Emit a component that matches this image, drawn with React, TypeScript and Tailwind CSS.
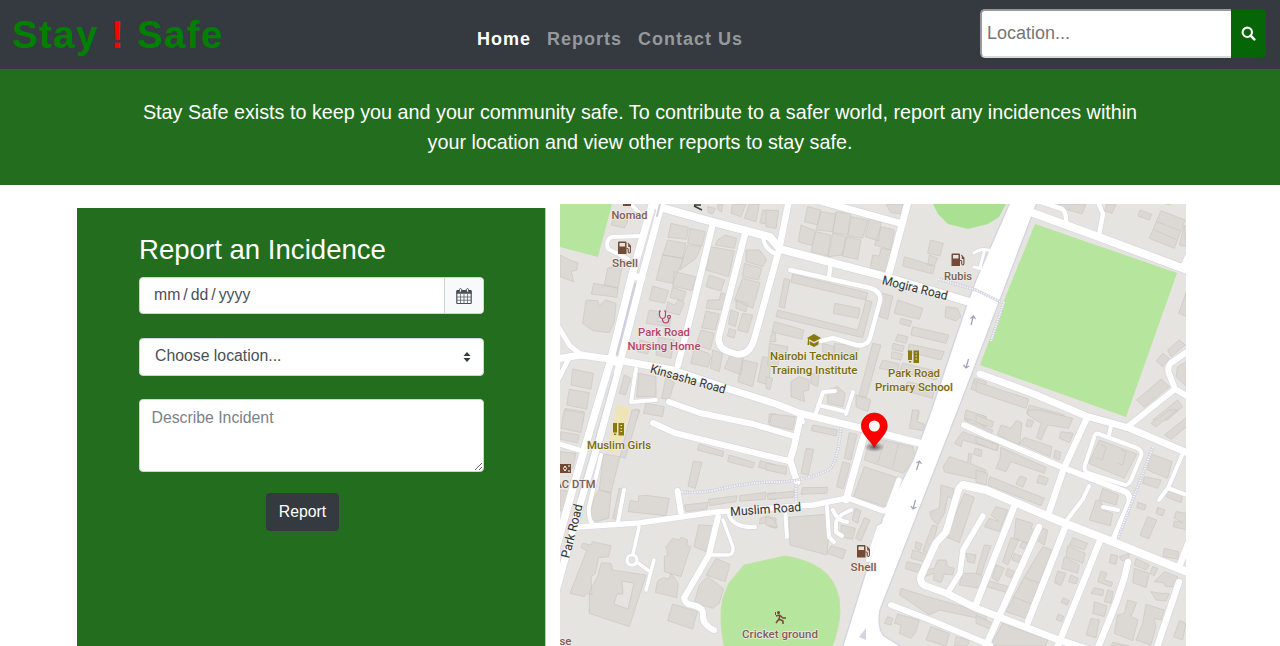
import React from "react";

type Road = [string, number];

const roads: Road[] = [
  ["M653 202L632 275L610 363L593 420L573 488L555 552", 7.5],
  ["M662 202L641 280L620 363L600 437L587 480L575 522L556 592", 7],
  ["M632 276L642 278M611 362L620 362", 7],
  ["M556 359L581 355L623 361L673 370L729 389L776 404L799 413L856 427L919 443", 7],
  ["M669 402L700 413L753 424L793 436", 6],
  ["M653 423L675 433L703 440L776 458L789 461", 6],
  ["M801 415L794 447L790 460L797 482", 6.5],
  ["M659 207L713 222L770 237L780 249L879 275L973 303", 8],
  ["M789 200L779 250L754 340Q749 356 736 354L727 351Q717 347 719 336L746 230", 6.5],
  ["M713 223L692 310L678 365", 6.5],
  ["M763 237Q764 249 776 254", 4],
  ["M823 202L899 223M908 202L888 277", 7],
  ["M790 270L866 287Q882 290 880 301L870 338Q867 347 856 345L833 338L821 341M831 262L829 277", 4.5],
  ["M816 413L823 392L835 391M846 414L853 392M818 405L843 411M800 412L803 422", 4],
  ["M1033 213L1099 237L1190 271", 8],
  ["M1041 202L1062 209Q1067 213 1066 224M1098 202L1103 214L1099 235M1190 250L1182 268", 4.5],
  ["M974 253Q981 247 992 251M974 267L986 270M984 252L980 268", 3],
  ["M980 374L1034 394L1086 416L1129 428L1190 454", 7],
  ["M1190 350L1171 363Q1166 368 1170 376L1175 389L1126 428M1175 389L1190 398", 6],
  ["M964 425L986 435L1064 468L1126 492Q1131 496 1129 504L1114 538", 6],
  ["M963 485L986 490L1064 523L1103 538L1190 573", 8],
  ["M964 485Q959 485 957 495L946 532L936 543L921 576Q919 583 926 586L946 593L976 608L1059 640L1090 650", 7],
  ["M983 516L963 550L960 573L947 594M988 575L976 603", 5.5],
  ["M1086 420L1064 468L1048 515", 6.5],
  ["M1014 507L975 607M1039 527L984 650M1066 525L1028 622M1101 538L1057 648", 6.5],
  ["M1128 562L1124 579L1116 603L1097 650M1179 582L1156 650M1190 539L1179 567", 6.5],
  ["M1099 434L1137 448Q1143 451 1141 456L1131 480Q1128 487 1122 484L1088 473Q1083 470 1085 465L1094 438Q1095 432 1099 434M1111 426L1109 435", 4],
  ["M1089 486L1083 499L1067 520M1103 507L1118 510M1183 453L1168 488L1159 500M1168 488L1190 496", 4],
  ["M891 605L930 620L990 645", 6],
  ["M577 527L639 523L716 512L813 505L848 498L883 511Q889 510 890 504L899 480", 5.5],
  ["M864 436L846 500", 7],
  ["M624 490L618 522M601 455L589 507Q588 518 592 523", 4],
  ["M677.500 491L681 513", 6],
  ["M639 527L633 554M638 563L649 571M654 560L646 590", 3.5],
  ["M718 517L709 555L684 598Q685 604 692 605Q703 607 703 614Q702 625 714 630", 6],
  ["M723 520L733 547Q734 555 727 555L711 555", 3.5],
  ["M729 515Q734 528 755 527M785 508L787 537M827 507L829 537L834 542", 4],
  ["M833 510Q837 521 847 522M851 510Q836 516 836 524L836 532L842 536M884 525L879 527L868 560", 4],
  ["M641 236L612 237Q605 239 608 249L628 259M629 202L643 217", 4],
  ["M556 323L570 346L583 356M568 360L558 380M556 443L579 450", 5],
  ["M636 369L631 402L656 400", 4],
];

const footpaths = [
  "M682 492Q700 494 725 488T776 482T829 470Q838 462 841 427",
  "M796 483L796 502",
  "M1153 447L1118 538",
  "M938 279L976 290L1003 303",
  "M1004 302L991 341",
];

/* Building outlines by map tile; tile units are one third of a pixel. */
const tiles: { x: number; y: number; d: string }[] = [
  {
    x: 556, y: 200,
    d: `M345 70L397 82L392 118L336 112ZM402 85L448 95L438 138L395 130ZM335 120L390 130L380 175L320 165ZM320 165L380 175L372 210L420 175L435 140L395 135L375 195L350 250L300 240ZM355 215L420 230L408 272L350 258Z
    M290 258L338 272L326 310L280 300ZM350 262L390 275L382 303L342 292ZM335 305L355 315L368 300L385 308L370 345L330 335ZM280 330L310 335L305 365L345 355L340 380L270 370Z
    M485 120L508 105L542 115L535 145L478 135ZM465 140L535 153L518 230L450 210ZM460 225L506 240L495 273L450 260ZM455 300L490 300L495 278L512 284L498 330L450 325Z
    M450 333L490 342L478 390L437 384ZM435 390L475 400L463 450L420 435ZM415 445L458 460L464 475L456 502L404 490ZM470 450L500 460L490 515L463 505Z
    M570 150L610 150L632 178L620 200L570 185ZM565 190L618 205L608 240L560 230ZM560 235L612 248L600 290L590 325L535 300ZM540 300L575 310L570 335L540 325ZM525 330L548 338L538 380L518 372ZM560 340L590 345L575 398L545 390ZM520 385L540 392L534 414L514 408Z
    M525 460L562 470L555 525L505 505ZM560 480L605 490L590 560L545 545ZM620 470L645 475L638 555L605 545Z
    M155 205L200 195L185 265L145 255ZM113 250L186 263L183 292L106 282ZM90 300L125 302L130 318L148 300L180 310L175 365L160 398L110 392L80 370Z
    M12 165L40 180L66 188L62 210L46 215L53 245L12 230ZM175 50L215 62L205 84L165 75ZM205 525L225 535L208 585L190 580ZM248 520L300 530L300 590L242 590ZM270 609L325 620L320 650L262 640ZM330 530L355 548L340 598L317 595Z
    M50 507L112 520L105 568L45 555ZM40 568L100 578L92 628L32 615ZM28 625L85 635L80 670L20 660ZM238 627L252 630L240 662L228 662ZM307 412L355 420L345 475L300 465ZM252 420L285 428L275 462L245 455Z
    M485 12L500 12L497 36L485 28ZM530 12L570 12L555 50L525 40ZM580 12L610 12L600 65L565 55ZM620 30L660 35L660 80L612 68ZM455 20L478 25L470 42L457 38ZM655 380L660 425L640 425Z`,
  },
  {
    x: 766, y: 200,
    d: `M125 20L165 30L155 75L115 65ZM165 35L210 42L200 95L150 90ZM210 35L255 40L245 105L200 98ZM255 50L305 60L290 115L245 108ZM105 75L148 92L138 137L97 125ZM150 95L195 105L185 168L135 155ZM200 100L240 110L230 165L187 170ZM242 110L285 120L275 178L228 168Z
    M310 55L345 68L338 123L297 110ZM345 80L385 90L375 150L325 135ZM360 12L412 12L405 42L375 38ZM320 165L340 168L345 145L375 150L360 215L312 205ZM0 30L38 32L30 85L0 80Z
    M493 120L532 130L522 168L485 160ZM490 165L515 175L505 198L485 195ZM415 170L507 198L500 222L410 198Z
    M80 222L305 278L300 300L75 247ZM55 235L72 240L55 325L39 320ZM207 310L282 325L277 355L202 340ZM35 330L275 390L300 300L318 305L290 413L30 350ZM25 365L113 390L108 418L18 396Z
    M350 280L380 288L365 358L340 350ZM395 300L470 325L460 358L385 340ZM540 320L575 325L585 350L570 363L537 352ZM405 355L437 363L432 380L401 370ZM440 380L548 405L540 430L435 405ZM395 403L425 410L420 430L388 422ZM382 430L415 438L410 455L378 448ZM430 432L535 455L525 480L425 455ZM378 455L410 462L405 480L375 475ZM350 480L400 492L395 515L340 505ZM425 545L505 565L500 595L410 570ZM410 490L520 515L510 540L400 515Z
    M320 430L345 435L300 595L278 590ZM10 430L65 440L62 465L40 468L35 500L5 495ZM170 430L205 440L200 465L170 455ZM205 430L280 440L270 475L205 465ZM0 530L20 535L12 570L0 565ZM75 545L100 530L130 540L128 570L112 575L116 605L75 590ZM135 520L160 525L155 560L135 550ZM185 570L215 560L238 580L230 620L185 610ZM270 585L295 590L315 600L305 635L270 620ZM440 630L460 635L455 660L435 660ZM625 535L660 545L660 580L615 568ZM600 632L660 650L660 660L595 660Z`,
  },
  {
    x: 976, y: 200,
    d: `M235 12L330 12L318 42L250 22ZM393 12L420 12L408 40L385 33ZM492 30L527 43L520 60L486 48ZM555 32L627 60L595 145L520 115ZM542 65L612 92M530 88L600 118M625 75L632 140L610 135ZM630 278L632 350L608 340ZM610 420L628 435L585 470L575 450ZM560 460L580 475L560 500L541 483ZM605 500L632 485L632 560L600 530ZM555 537L580 560L505 622L482 600ZM605 600L620 620L575 660L530 660Z
    M0 545L158 597L150 625L0 575ZM160 615L265 645L260 660L152 640Z`,
  },
  {
    x: 556, y: 410,
    d: `M25 0L85 10L75 68L15 55ZM15 65L70 75L65 98L12 88ZM12 125L60 130L50 175L12 165ZM12 240L45 245L30 315L12 300ZM228 0L250 2L208 145L192 140ZM142 132L192 140L165 248L130 240ZM130 240L165 250L158 325L120 335L100 320L115 260ZM190 235L207 240L185 330L170 325Z
    M430 102L503 125L500 140L424 120ZM520 135L597 158L590 174L515 155ZM613 152L660 165L660 185L607 172ZM412 153L438 157L418 235L396 228ZM640 12L660 12L660 45L637 38Z
    M248 258L270 256L340 265L330 317L217 305L222 272L247 275ZM385 285L455 277L453 297L390 305ZM457 268L543 257L540 275L460 287ZM551 257L630 247L628 268L550 274ZM635 250L660 248L660 268L640 268Z
    M613 325L635 318L660 325L660 355L640 350L635 337L610 342ZM428 345L475 347L450 425L414 410ZM80 400L105 405L110 395L165 407L158 440L128 443L118 490L105 500L108 555L90 550L85 560L65 555L42 550L92 422L76 413Z
    M136 458L165 460L170 480L270 495L220 650L100 610L100 545L125 500ZM350 385L370 390L375 382L395 390L392 405L404 410L375 500L325 485L325 440L335 435L330 410ZM322 502L338 508L345 490L367 520L362 563L298 547L305 512ZM480 445L522 463L508 515L450 495ZM455 500L503 537L490 580L470 595L415 578L430 525ZM350 582L424 605L410 657L335 632Z`,
  },
  {
    x: 766, y: 410,
    d: `M18 12L88 20L80 60L10 45ZM140 45L215 60L210 78L136 62ZM120 115L143 118L127 195L105 190ZM0 160L62 170L60 193L0 180ZM250 68L273 73L255 150L235 145ZM230 155L253 162L232 236L212 230ZM110 233L185 232L182 250L105 253ZM5 252L85 243L83 262L5 268Z
    M350 90L440 110L448 145L412 190L295 150L310 90ZM354 97L335 160M397 102L380 175M295 170L400 205L375 295L262 260ZM68 322L178 313L190 350L183 435L72 405ZM268 295L285 303L275 340L258 330ZM295 323L312 330L285 393L268 385ZM195 407L240 420L230 447L185 430ZM225 345L268 355L260 388L225 380ZM0 320L25 330L35 353L0 345Z
    M440 0L458 0L452 35L475 42L472 62L430 55ZM600 0L660 20L660 50L595 22ZM590 65L698 104L695 122L590 90L585 110L565 100ZM628 115L648 120L645 140L622 133ZM550 140L605 158L608 130L618 133L612 160L660 180L655 212L535 186L532 170ZM525 225L565 237L558 265L545 260L535 310L515 345L495 325L492 305L520 295ZM595 250L625 262L580 398L540 380ZM500 345L515 350L490 430L470 423ZM440 420L482 432L475 455L435 445ZM450 395L468 402L462 422L447 415ZM423 455L465 465L460 488L418 476ZM515 450L540 450L545 470L565 475L560 495L535 492L525 518L502 510L505 490L475 500L480 480L505 475ZM600 430L630 435L625 460L605 455ZM590 490L645 490L655 515L640 535L580 525ZM600 32L680 60L675 78L595 50Z
    M405 535L485 560L660 610L660 630L520 600L490 615L425 570L400 555ZM365 620L380 625L375 645L355 640ZM395 612L460 630L450 665L435 685L400 670L405 645L385 640ZM495 650L550 670L540 708L480 690ZM570 680L610 690L605 708L565 708Z`,
  },
  {
    x: 976, y: 410,
    d: `M0 15L52 35L48 52L0 38ZM75 45L105 55L120 32L138 38L130 105L65 75ZM155 28L173 33L165 52L150 48ZM155 0L190 0L290 25L278 55L215 45L195 90L182 83L195 40L155 15ZM255 65L292 70L280 98L250 85ZM145 82L228 110L222 140L130 100ZM237 120L255 127L250 150L233 143Z
    M75 112L210 172L205 190L105 155L90 185L60 175L72 145ZM0 80L68 105L60 122L0 98ZM42 200L205 265L195 287L35 225ZM0 180L35 190L30 225L0 218ZM132 198L152 205L140 232L120 222ZM190 195L217 205L210 225L182 218Z
    M370 90L482 132L445 205L338 160ZM375 105L390 110L380 150L360 143M435 120L450 125L440 165L425 160M520 130L588 155L575 205L515 180ZM505 200L555 210L545 235L500 220ZM575 235L622 248L615 278L570 260ZM486 277L510 285L505 300L482 293ZM545 292L567 300L560 318L540 310ZM515 320L542 330L518 387L492 375ZM600 305L632 310L632 360L592 350L595 333L620 337L595 325ZM380 235L428 255L420 285L370 270ZM360 270L375 275L380 300L410 310L403 348L340 330ZM565 415L607 425L607 448L560 440Z
    M525 40L580 0L605 0L540 50ZM565 75L632 22L632 50L585 88Z
    M60 290L95 300L70 365L25 350L40 325L68 335L45 315ZM120 325L170 340L165 355L180 362L155 400L115 385ZM185 350L215 360L205 405L180 390ZM25 405L45 407L15 495L0 490ZM105 383L128 390L95 465L80 455ZM140 395L155 400L145 418L130 410ZM115 430L138 440L130 458L108 450ZM60 465L85 475L65 515L48 503ZM95 475L115 485L105 505L88 495ZM40 513L98 530L90 547L33 530ZM200 410L228 420L150 625L90 605L145 500ZM145 503L190 520M110 560L167 582M290 383L335 400L325 420L280 405ZM275 407L328 430L320 460L270 440ZM265 440L310 465L305 490L257 475ZM245 483L270 490L255 527L235 518ZM285 495L307 505L300 522L278 515ZM262 563L280 572L275 585L255 577ZM247 612L264 620L257 635L240 628Z
    M405 433L425 437L420 463L400 458ZM375 483L393 490L385 510L410 517L405 530L365 515ZM355 533L384 540L380 557L345 550ZM395 540L412 545L405 580L385 575ZM355 575L393 588L385 620L350 610ZM345 625L370 630L360 683L330 675ZM430 440L460 430L455 455L435 450ZM480 445L520 465L510 480L475 465ZM475 475L520 490L510 533L470 518ZM530 470L545 475L535 497L522 490ZM455 570L482 578L465 620L486 630L470 692L415 670L425 615L445 610ZM510 583L565 600L555 630L535 625L540 650L525 705L480 690L500 640ZM525 545L555 550L580 550L570 573L540 570ZM565 485L605 500L595 530L570 530L560 518L535 515ZM610 632L630 640L620 690L593 680Z
    M0 615L50 640L42 657L0 640ZM80 640L215 690L208 708L42 708ZM410 697L460 708L405 708Z`,
  },
];

const Fuel = ({ x, y }: { x: number; y: number }) => (
  <g transform={`translate(${x} ${y})`}>
    <path
      fill="#734b35"
      fillRule="evenodd"
      d="M0 1Q0 0 1 0H7.5Q8.5 0 8.5 1V12.5H0ZM1.5 1.6V5H7V1.6Z"
    />
    <path
      d="M8.5 7H9.5Q10.2 7 10.2 8V10.5Q10.4 11.5 11.3 11.5Q12.4 11.5 12.4 10V4.5L9.8 1.5M12.4 5L10.8 5L10.8 3"
      fill="none"
      stroke="#734b35"
      strokeWidth="1.1"
    />
  </g>
);

const School = ({ x, y }: { x: number; y: number }) => (
  <g transform={`translate(${x} ${y})`} fill="#8a7a0c">
    <path d="M0 0H4V9.5H0ZM1 10.5H3.2V12H1Z" />
    <path fillRule="evenodd" d="M5.5 0H11V12.5H5.5ZM7.5 2V3H9V2ZM7.5 5V6H9V5ZM7.5 8V9H9V8Z" />
  </g>
);

type Label = { t: string; x: number; y: number; w: number; c: string; r?: number };

const brown = "#7d5f53";
const olive = "#7a6c0a";
const rose = "#b3446c";
const ink = "#333333";

const labels: Label[] = [
  { t: "Nomad", x: 629.5, y: 219, w: 36, c: brown },
  { t: "Shell", x: 625, y: 267, w: 26, c: brown },
  { t: "Rubis", x: 958, y: 280, w: 28, c: brown },
  { t: "Shell", x: 863.5, y: 570.5, w: 26, c: brown },
  { t: "AC DTM", x: 575, y: 488, w: 41, c: brown },
  { t: "Cricket ground", x: 780, y: 638, w: 76, c: brown },
  { t: "se", x: 565.5, y: 645, w: 12, c: brown },
  { t: "Park Road", x: 664, y: 336, w: 52, c: rose },
  { t: "Nursing Home", x: 664, y: 350, w: 73, c: rose },
  { t: "Nairobi Technical", x: 814, y: 360, w: 88, c: olive },
  { t: "Training Institute", x: 814, y: 374, w: 87, c: olive },
  { t: "Park Road", x: 914, y: 376.8, w: 52, c: olive },
  { t: "Primary School", x: 914, y: 390.8, w: 78, c: olive },
  { t: "Muslim Girls", x: 619, y: 449, w: 64, c: olive },
  { t: "Kinsasha Road", x: 687, y: 383.2, w: 78, c: ink, r: 16 },
  { t: "Mogira Road", x: 914, y: 292, w: 67, c: ink, r: 14 },
  { t: "Muslim Road", x: 766, y: 513.5, w: 71, c: ink, r: -4 },
  { t: "Park Road", x: 576, y: 532, w: 55, c: ink, r: -76 },
];

function StreetMap() {
  return (
    <svg
      className="block h-[442px] w-[626px] shrink-0 bg-[#e5e4e0]"
      viewBox="560 204 626 442"
      role="img"
      aria-label="Street map"
    >
      <g fill="#b6e59e">
        <path d="M560 204H612L598 257L560 247Z" />
        <path d="M1035 224L1177 273L1126 417L980 365L1007 293Z" />
        <path fill="#aae092" d="M933 204H1006L999 217L988 224L968 229L948 224L938 214Z" />
        <path fill="#aae092" d="M1165 204H1172L1169 205Z" />
        <path
          stroke="#c5e2a4"
          d="M725 650Q718 620 723 598L729 583L744 565L785 556Q806 559 821 569Q835 579 839 598L840 612Q839 630 831 650Z"
        />
      </g>
      <path d="M617 405L630 408L618 454L607 451Z" fill="#efe4b4" />
      {tiles.map((t) => (
        <g key={`${t.x}-${t.y}`} transform={`translate(${t.x} ${t.y}) scale(.33333)`}>
          <path d={t.d} fill="#dcd8d4" stroke="#ccc5c0" strokeWidth="2" />
        </g>
      ))}
      <path d="M622 581L634 583L628 609L614 604L617 594H623Z" fill="#e5e4e0" stroke="#ccc5c0" strokeWidth=".7" />
      <g fill="none" strokeLinecap="round" strokeLinejoin="round">
        {roads.map(([d, w]) => (
          <path key={`c${d}`} d={d} stroke="#d5d5e2" strokeWidth={w + 1.2} />
        ))}
        <circle cx="632" cy="560" r="5" stroke="#d5d5e2" strokeWidth="4.4" />
        <path
          d="M1011 200L976 280L966 307L930 414L913 460L883 517L840 655H915L884 636Q877 628 880 610L958 410L976 363L1038 200Z"
          fill="#fff"
          stroke="#d5d5e2"
          strokeWidth="1.4"
        />
        {roads.map(([d, w]) => (
          <path key={d} d={d} stroke="#fff" strokeWidth={w} />
        ))}
        <circle cx="632" cy="560" r="5" stroke="#fff" strokeWidth="3.2" />
        <path d="M660 204L657 216M635 284L617 354" stroke="#cfcfdd" strokeWidth="2" />
        <path d="M613.500 374L596 436L578 497" stroke="#d5d5e2" strokeWidth="1" />
        {footpaths.map((d) => (
          <g key={d} strokeLinecap="butt">
            <path d={d} stroke="#cfcfdf" strokeWidth="3" />
            <path d={d} stroke="#f4f4f7" strokeWidth="2" strokeDasharray="1.5 1" />
          </g>
        ))}
      </g>
      <g fill="none" stroke="#9ea0ba" strokeWidth="1.200">
        <path d="M971 325L973.500 316M970.500 318.500L973.500 316L975.500 319M968.500 359L966 368M963.500 365L966 368L969 366" />
        <path d="M916.500 470L919.500 461M916.500 463L919.500 461L921.500 464M915.500 500L913 509M911 506L913 509L916.500 507" />
      </g>
      <path d="M859 637L866 628V640Z" fill="#d5d5e2" />
      <path d="M623 203H631V206H623Z" fill="#734b35" />
      <path d="M694 206L702 210M694 205H701" stroke="#3a3a3a" strokeWidth="1.4" />

      <Fuel x={618} y={241.5} />
      <Fuel x={951.5} y={253.5} />
      <Fuel x={857} y={545} />
      <School x={613} y={423} />
      <School x={908} y={350.5} />
      <g fill="#8a7a0c">
        <path d="M807 338L814 334L821 338L814 342ZM809.500 341L814 343.500L818.500 341V344.500L814 347L809.500 344.500Z" />
        <path d="M808 339H809V345H807.500Z" />
      </g>
      <g fill="none" stroke={rose} strokeWidth="1.2">
        <path d="M661 311H659.500V315Q660 318.500 662.500 318.500Q665.500 318.500 665.500 315V311H664M662.500 318.500V320Q663 323 666 323Q669 323 669 318" />
        <circle cx="669" cy="316.8" r="1.5" />
      </g>
      <g>
        <path d="M558 464H571V473H558Z" fill="#734b35" />
        <path d="M565 466Q562 468.500 565 471Q568 468.500 565 466M568 466H570M568 471H570" fill="none" stroke="#fff" />
      </g>
      <g fill="none" stroke="#734b35" strokeWidth="1.5">
        <circle cx="778.5" cy="612.5" r=".8" fill="#734b35" />
        <path d="M776 616L779.500 615L783 618H786M780 615L779 619L783 621V624M779 619L776 623" />
        <path d="M775.500 612V615" strokeWidth="1" />
      </g>

      <g
        fontFamily="Roboto, 'Noto Sans', sans-serif"
        textAnchor="middle"
        stroke="#f0eeeb"
        strokeWidth="1.4"
        strokeLinejoin="round"
        paintOrder="stroke"
      >
        {labels.map((l) => (
          <text
            key={`${l.t}${l.x}`}
            x={l.x}
            y={l.y}
            fill={l.c}
            fontSize={l.r ? 12.5 : 11.5}
            fontWeight={l.r ? 400 : 500}
            textLength={l.w}
            lengthAdjust="spacingAndGlyphs"
            transform={l.r ? `rotate(${l.r} ${l.x} ${l.y})` : undefined}
          >
            {l.t}
          </text>
        ))}
      </g>

      <defs>
        <radialGradient id="pin-shadow">
          <stop offset="0" stopColor="#333" stopOpacity=".75" />
          <stop offset="1" stopColor="#333" stopOpacity="0" />
        </radialGradient>
      </defs>
      <ellipse cx="874.3" cy="447" rx="10" ry="5" fill="url(#pin-shadow)" />
      <path
        fill="red"
        stroke="#c40000"
        strokeWidth=".6"
        d="M874.300 447.300C870 440 861.300 434 861.300 425.800A13 12.800 0 0 1 887.300 425.800C887.300 434 878.500 440 874.300 447.300Z"
      />
      <circle cx="874.3" cy="426" r="5.5" fill="#fff" />
    </svg>
  );
}

const SearchIcon = () => (
  <svg className="size-[15px]" viewBox="0 0 15 15" fill="none" stroke="white" strokeWidth="2.1">
    <circle cx="6.3" cy="6.3" r="4.7" />
    <path d="M9.700 9.700L13.300 13.300" strokeLinecap="round" strokeWidth="2.6" />
  </svg>
);

const CalendarIcon = () => (
  <svg className="h-4 w-4" viewBox="0 0 16 16" fill="none" stroke="#495057">
    <rect x=".8" y="2.5" width="14.4" height="13" rx=".8" strokeWidth="1.2" />
    <path d="M.5 4.200H15.500" strokeWidth="3" />
    <path d="M1 9H15M1 12.200H15M4.500 6V15M8 6V15M11.500 6V15" strokeWidth=".7" />
    <rect x="3.5" y=".6" width="2" height="3.6" rx="1" fill="#fff" strokeWidth=".9" />
    <rect x="10.5" y=".6" width="2" height="3.6" rx="1" fill="#fff" strokeWidth=".9" />
  </svg>
);

export default function App() {
  return (
    <div className="h-[646px] w-[1280px] overflow-hidden bg-white font-['Liberation_Sans',Arial,sans-serif]">
      <header className="flex h-[69px] bg-[#343a40]">
        <h1 className="w-[465px] pt-[7px] pl-3 text-[38.5px] leading-[56px] font-bold tracking-[1.35px] text-[#008000]">
          Stay <span className="text-[#ff0000]">!</span> Safe
        </h1>
        <nav className="flex w-[515px] gap-4 pt-[26px] pl-3 text-[18px] leading-[26px] font-bold tracking-[1px] text-[#96999c]">
          <a className="text-white">Home</a>
          <a>Reports</a>
          <a>Contact Us</a>
        </nav>
        <form className="mt-[9px] flex h-[49px]">
          <input
            className="h-[49px] w-[251px] rounded-l-[5px] border-2 border-r-0 border-[#d9d9d9] border-t-[#999] border-l-[#999] bg-white px-[5px] text-[18px] placeholder:text-[#757575]"
            placeholder="Location..."
          />
          <button type="button" className="flex w-[35px] items-center justify-center rounded-r-[5px] bg-[#066506]">
            <SearchIcon />
          </button>
        </form>
      </header>

      <section className="h-[116px] bg-[#226d1e] pt-7 text-center text-[19.75px] leading-[30px] text-white">
        <p>
          Stay Safe exists to keep you and your community safe. To contribute to a safer world, report any incidences within
          <br />
          your location and view other reports to stay safe.
        </p>
      </section>

      <main className="flex pl-[77px]">
        <section className="mt-[23px] mr-[14px] h-[438px] w-[469px] border-r border-[#b6d3b4] bg-[#226d1e] pl-[62px]">
          <h2 className="pt-[25px] text-[27.6px] leading-[34px] text-white">Report an Incidence</h2>
          <div className="mt-[10px] flex h-[37px] w-[345px] overflow-hidden rounded-[4px] border border-[#ced4da] bg-white">
            <div className="flex-1 pl-[14px] text-[15.8px] leading-[33px] text-[#495057]">
              <span>mm</span>
              <span className="px-[3px]">/</span>
              <span>dd</span>
              <span className="px-[3px]">/</span>
              <span>yyyy</span>
            </div>
            <div className="flex w-[39px] items-center justify-center border-l border-[#ced4da] bg-[#f8f9fa]">
              <CalendarIcon />
            </div>
          </div>
          <div className="mt-6 flex h-[38px] w-[345px] items-center rounded-[4px] border border-[#ced4da] bg-white pr-3 pl-[15px] text-[15.8px] text-[#495057]">
            <span className="flex-1 pb-[3px]">Choose location...</span>
            <svg className="h-[10px] w-2" viewBox="0 0 8 10" fill="#343a40">
              <path d="M4 0L7.500 4H.5ZM4 10L.5 6H7.500Z" />
            </svg>
          </div>
          <textarea
            className="mt-[23px] block h-[73px] w-[345px] resize rounded-[4px] border border-[#ced4da] bg-white px-[11.5px] py-[6px] text-[15.8px] leading-6 placeholder:text-[#7a8288]"
            placeholder="Describe Incident"
          />
          <button type="button" className="mt-[21px] ml-[127px] block h-[38px] w-[73px] rounded-[4px] bg-[#343a40] text-[15.8px] text-white">
            Report
          </button>
        </section>
        <div className="pt-[19px]">
          <StreetMap />
        </div>
      </main>
    </div>
  );
}
